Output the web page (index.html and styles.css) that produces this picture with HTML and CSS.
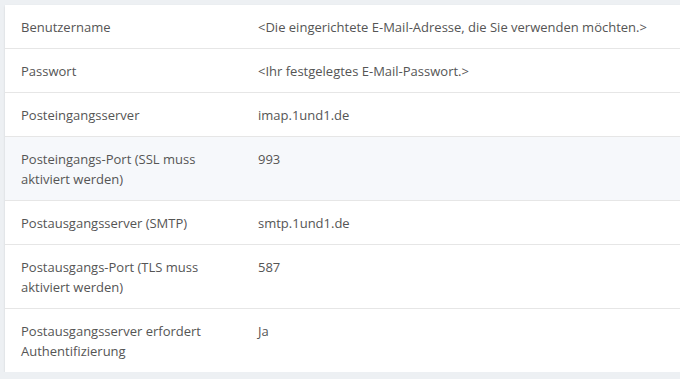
FILE: index.html
```html
<!DOCTYPE html>
<html lang="de">

<head>
    <meta charset="UTF-8">
    <meta name="viewport" content="width=device-width, initial-scale=1.0">
    <title>E-Mail Einstellungen</title>
    <link rel="stylesheet" href="styles.css">
</head>

<body>
    <div class="card">
        <table class="settings">
            <tr>
                <td class="label">Benutzername</td>
                <td>&lt;Die eingerichtete E-Mail-Adresse, die Sie verwenden möchten.&gt;</td>
            </tr>
            <tr>
                <td class="label">Passwort</td>
                <td>&lt;Ihr festgelegtes E-Mail-Passwort.&gt;</td>
            </tr>
            <tr>
                <td class="label">Posteingangsserver</td>
                <td>imap.1und1.de</td>
            </tr>
            <tr class="active">
                <td class="label">Posteingangs-Port (SSL muss aktiviert werden)</td>
                <td>993</td>
            </tr>
            <tr>
                <td class="label">Postausgangsserver (SMTP)</td>
                <td>smtp.1und1.de</td>
            </tr>
            <tr>
                <td class="label">Postausgangs-Port (TLS muss aktiviert werden)</td>
                <td>587</td>
            </tr>
            <tr>
                <td class="label">Postausgangsserver erfordert Authentifizierung</td>
                <td>Ja</td>
            </tr>
        </table>
    </div>
</body>

</html>
```

FILE: styles.css
```css
body {
    font-family: "Open Sans", "Noto Sans", sans-serif;
    font-size: 13px;
    background-color: #edf0f3;
    color: #555;
    margin: 0;
    padding: 5px 0 0 5px;
}

.card {
    background-color: #fff;
    width: 690px;
    box-shadow: 0 1px 2px rgba(0, 0, 0, 0.12);
}

.settings {
    width: 100%;
    border-collapse: collapse;
}

.settings td {
    padding: 12px 16px 11px;
    line-height: 20px;
    vertical-align: top;
}

.settings tr + tr td {
    border-top: 1px solid #e6e6e6;
}

.settings .label {
    width: 205px;
}

.settings tr.active {
    background-color: #f6f8fb;
}
```
